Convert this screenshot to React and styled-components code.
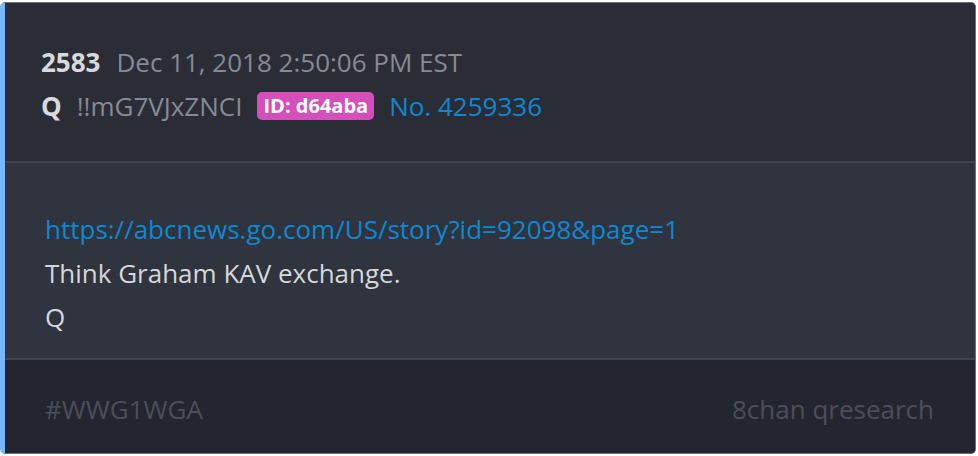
import React from "react";
import styled, { createGlobalStyle } from "styled-components";

const Global = createGlobalStyle`
  html, body { margin: 0; padding: 0; background: #ffffff; }
  body { font-family: "Open Sans", "Noto Sans", sans-serif; }
`;

const Page = styled.div`
  padding: 2px 2px 2px 0;
`;

const Card = styled.article`
  border: 1px solid #6c7079;
  border-left: 5px solid #78b6fb;
  border-radius: 5px;
  overflow: hidden;
  background: #2a2d36;
`;

const Header = styled.header`
  background: #2a2d36;
  padding: 37px 40px 33px 36px;
  border-bottom: 2px solid #3f444d;
`;

const Row = styled.div`
  display: flex;
  align-items: center;
  gap: ${(p) => p.$gap || 16}px;
  height: 44px;
  font-size: 26px;
`;

const Strong = styled.span`
  font-weight: 700;
  color: #d9d9dc;
`;

const Muted = styled.span`
  color: #868a95;
`;

const Badge = styled.span`
  background: #d44fba;
  color: #ffffff;
  font-weight: 700;
  font-size: 20px;
  line-height: 28px;
  padding: 0 6px;
  border-radius: 5px;
`;

const Link = styled.a`
  color: #0e88d3;
  text-decoration: none;
`;

const Body = styled.section`
  background: #2f343e;
  padding: 44px 40px 19px 40px;
  border-bottom: 2px solid #3f444d;
  font-size: 26px;
  line-height: 44px;
  color: #d6d7da;
`;

const Line = styled.div``;

const Footer = styled.footer`
  background: #23262e;
  padding: 27px 41px 22px 40px;
  display: flex;
  justify-content: space-between;
  font-size: 26px;
  line-height: 44px;
  color: #4b4f5a;
`;

export default function App() {
  return (
    <Page>
      <Global />
      <Card>
        <Header>
          <Row>
            <Strong>2583</Strong>
            <Muted>Dec 11, 2018 2:50:06 PM EST</Muted>
          </Row>
          <Row $gap={15}>
            <Strong>Q</Strong>
            <Muted>!!mG7VJxZNCI</Muted>
            <Badge>ID: d64aba</Badge>
            <Link href="#">No. 4259336</Link>
          </Row>
        </Header>
        <Body>
          <Line>
            <Link href="#">https://abcnews.go.com/US/story?id=92098&amp;page=1</Link>
          </Line>
          <Line>Think Graham KAV exchange.</Line>
          <Line>Q</Line>
        </Body>
        <Footer>
          <span>#WWG1WGA</span>
          <span>8chan qresearch</span>
        </Footer>
      </Card>
    </Page>
  );
}
